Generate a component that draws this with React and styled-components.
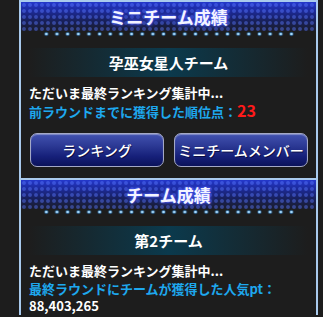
import React from 'react';
import styled, { createGlobalStyle } from 'styled-components';

const GlobalStyle = createGlobalStyle`
  html, body {
    margin: 0;
    padding: 0;
    background: #1d1d1d;
  }
  body {
    font-family: "Noto Sans CJK JP", "Noto Sans", sans-serif;
    color: #fff;
  }
`;

const Page = styled.div`
  width: 323px;
  height: 317px;
  overflow: hidden;
  padding-left: 19px;
  box-sizing: border-box;
`;

const Panel = styled.div`
  width: 299px;
  box-sizing: border-box;
  border-left: 2px solid #a9caed;
  border-right: 2px solid #a9caed;
`;

const Section = styled.section`
  border-top: 2px solid #a9caed;
  padding-bottom: ${(p) => p.$pb || 0}px;
`;

const Header = styled.div`
  height: 29px;
  display: flex;
  align-items: center;
  justify-content: center;
  background-image:
    radial-gradient(circle at center, rgba(90, 120, 255, 0.45) 1.4px, transparent 2.4px),
    linear-gradient(to bottom, #2438cc 0%, #1c2a9a 30%, #18205a 65%, #1b1d2a 100%);
  background-size: 6px 6px, 100% 100%;
`;

const Title = styled.h2`
  margin: 0;
  font-size: 17px;
  font-weight: 700;
  color: #f4f4ff;
  text-shadow: 0 0 2px #5a6cff, 0 0 4px #4050e8, 0 0 7px #3040d0;
`;

const DotRow = styled.div`
  height: 6px;
  margin: 0 17px 0 20px;
  background-image: radial-gradient(circle at center, #a8dcff 0 0.9px, rgba(60, 150, 230, 0.55) 1.5px, transparent 2.6px);
  background-size: 10.67px 6px;
  background-repeat: repeat-x;
`;

const TeamBar = styled.div`
  margin: 11px 8px 0;
  height: 29px;
  display: flex;
  align-items: center;
  justify-content: center;
  background: linear-gradient(to right, rgba(12, 58, 76, 0) 0%, #0b3a4d 50%, rgba(12, 58, 76, 0) 100%);
`;

const TeamName = styled.div`
  font-size: 15px;
  font-weight: 700;
  color: #fff;
`;

const Info = styled.div`
  padding: 7px 8px 0;
  font-size: 13px;
  font-weight: 700;
  line-height: 17.5px;
  white-space: nowrap;
`;

const Line = styled.div`
  color: ${(p) => (p.$blue ? '#1ea8ee' : '#ffffff')};
`;

const Points = styled.span`
  color: #ff1a1a;
  font-size: 16px;
`;

const Buttons = styled.div`
  display: grid;
  grid-template-columns: 134px 134px;
  gap: 10px;
  padding: 13px 0 0 9px;
`;

const Button = styled.button`
  height: 34px;
  padding: 0;
  border: 1px solid #a3a8c6;
  border-radius: 7px;
  background: linear-gradient(to bottom, #4252b0 0%, #2a3792 40%, #16207a 70%, #0b125a 100%);
  box-shadow: inset 0 1px 1px rgba(255, 255, 255, 0.35);
  color: #fff;
  font-family: "Noto Sans CJK JP", "Noto Sans", sans-serif;
  font-size: 14px;
  font-weight: 500;
  text-shadow: 1px 1px 0 rgba(0, 0, 30, 0.6);
  white-space: nowrap;
  cursor: pointer;
`;

function ResultSection({ title, team, children, pb }) {
  return (
    <Section $pb={pb}>
      <Header>
        <Title>{title}</Title>
      </Header>
      <DotRow />
      <TeamBar>
        <TeamName>{team}</TeamName>
      </TeamBar>
      {children}
    </Section>
  );
}

export default function App() {
  return (
    <Page>
      <GlobalStyle />
      <Panel>
        <ResultSection title="ミニチーム成績" team="孕巫女星人チーム" pb={11}>
          <Info>
            <Line>ただいま最終ランキング集計中...</Line>
            <Line $blue>
              前ラウンドまでに獲得した順位点：<Points>23</Points>
            </Line>
          </Info>
          <Buttons>
            <Button>ランキング</Button>
            <Button>ミニチームメンバー</Button>
          </Buttons>
        </ResultSection>
        <ResultSection title="チーム成績" team="第2チーム">
          <Info>
            <Line>ただいま最終ランキング集計中...</Line>
            <Line $blue>最終ラウンドにチームが獲得した人気pt：</Line>
            <Line>88,403,265</Line>
          </Info>
        </ResultSection>
      </Panel>
    </Page>
  );
}
